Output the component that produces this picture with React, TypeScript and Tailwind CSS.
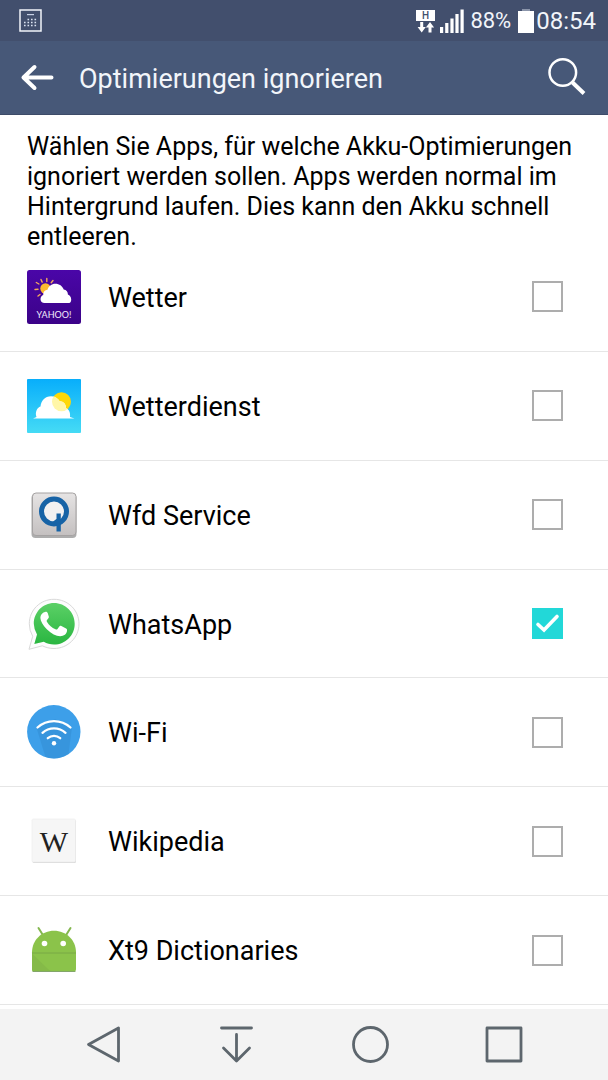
import { useState, type ReactNode } from 'react';

function YahooWeatherIcon() {
  return (
    <svg viewBox="0 0 54 54" className="size-[54px]" aria-hidden="true">
      <defs>
        <linearGradient id="yahoo-bg" x1="0" y1="0" x2="0" y2="1">
          <stop offset="0" stopColor="#4a06a8" />
          <stop offset="1" stopColor="#3b0288" />
        </linearGradient>
      </defs>
      <rect width="54" height="54" rx="2.5" fill="url(#yahoo-bg)" />
      <g stroke="#f3a95c" strokeWidth="1.4" strokeLinecap="round">
        <path d="M8 19.5l3 -.2M9.300 12.500l2.600 1.500M14 9.500l1.200 2.600M19.800 8.500v3M26 10.500l-1.800 2.300M11 26l2 -1.500" />
      </g>
      <circle cx="18.500" cy="18.500" r="5.200" fill="#fdbb2f" />
      <path
        d="M17.500 33c-2.300 0-4-1.600-4-3.800 0-2.200 1.200-3.700 2.800-4.200-.3-3 1.700-5 4.200-5.200C21.500 16 24.700 13.700 28.300 13.700c4 0 7.200 2.300 8.400 5.800 2.800.4 4.300 2.500 4.200 5 2 .7 3.300 2.700 3.300 5 0 2.200-.8 3.500-2 3.500z"
        fill="#fff"
      />
      <text x="27" y="47.500" textAnchor="middle" fontFamily="Lato, sans-serif" fontSize="9" fill="#f3ecfd">
        YAHOO!
      </text>
    </svg>
  );
}

function WeatherServiceIcon() {
  return (
    <svg viewBox="0 0 54 54" className="size-[54px]" aria-hidden="true">
      <defs>
        <linearGradient id="sky" x1="0" y1="0" x2="0" y2="1">
          <stop offset="0" stopColor="#08aefb" />
          <stop offset="1" stopColor="#45dbf5" />
        </linearGradient>
        <clipPath id="sky-cloud">
          <path d="M6 39.500l3.500-1.500c-1.700-4.500.5-9.500 4-10.500.5-6 4.500-10.300 10.500-10.300 4 0 7 2 8.700 5 4 .2 6.300 3 6.300 7 3.500 1.300 4.500 5 4 8.800l4.500 1.500z" />
        </clipPath>
      </defs>
      <rect width="54" height="54" rx="1" fill="url(#sky)" />
      <circle cx="34.500" cy="22.800" r="9.500" fill="#fdd808" />
      <path
        d="M6 39.500l3.500-1.500c-1.700-4.500.5-9.500 4-10.500.5-6 4.500-10.300 10.500-10.300 4 0 7 2 8.700 5 4 .2 6.300 3 6.300 7 3.500 1.300 4.500 5 4 8.800l4.500 1.500z"
        fill="#fff"
      />
      <circle cx="34.500" cy="22.800" r="9.500" fill="#fff6a8" clipPath="url(#sky-cloud)" />
    </svg>
  );
}

function WfdIcon() {
  return (
    <svg viewBox="0 0 54 54" className="size-[54px]" aria-hidden="true">
      <defs>
        <linearGradient id="wfd" x1="0" y1="0" x2="0" y2="1">
          <stop offset="0" stopColor="#e6e4e4" />
          <stop offset="1" stopColor="#c4c0c0" />
        </linearGradient>
      </defs>
      <rect x="4.500" y="6" width="45" height="44" rx="4" fill="#777" opacity=".6" />
      <rect x="5.500" y="5" width="43.500" height="42.500" rx="3.500" fill="url(#wfd)" stroke="#a5a2a2" />
      <circle cx="27" cy="23.500" r="12.500" fill="#f2f1f1" stroke="#1763a6" strokeWidth="5" />
      <path d="M29.500 25.500h4.300V43.500h-4.300zM25.500 34l4.500-3.500v4z" fill="#1763a6" />
    </svg>
  );
}

function WhatsAppIcon() {
  return (
    <svg viewBox="0 0 54 54" className="size-[54px]" aria-hidden="true">
      <defs>
        <linearGradient id="whatsapp" x1="0" y1="0" x2="0" y2="1">
          <stop offset="0" stopColor="#5bd066" />
          <stop offset="1" stopColor="#2ab641" />
        </linearGradient>
      </defs>
      <path
        d="M2 52.300l3.700-13A25 25 0 0 1 2.300 26.800C2.300 13 13.300 2.300 27 2.300S52 13 52 26.800 40.700 51.500 27 51.500c-4.200 0-8.200-1-11.700-2.700z"
        fill="#fdfdfd"
        stroke="#d9d9d9"
        strokeWidth="1"
      />
      <path
        d="M7.300 47l2.700-9.500a21 21 0 0 1-3.200-10.700C6.800 15.300 15.800 6 27 6s20.700 9 20.700 20.700S38.500 47.500 27 47.500c-3.700 0-7.200-1-10.200-2.700z"
        fill="url(#whatsapp)"
      />
      <path
        d="M20.800 16.300c-.8-1.500-1.500-1.600-2.700-1.400-2.900.6-4.800 3.300-4.700 6.200.1 3 2.500 7.200 6.400 11.100 4.800 4.500 9.200 7 13.400 7 3.800 0 6.400-2.300 6.800-5.200.2-1.700.1-2-.9-2.600l-4.700-2.300c-1-.4-1.500-.3-2.100.5l-1.800 2.300c-.6.7-1.100.7-2 .3-3.600-1.500-6.500-4-8.600-7.500-.4-.8-.3-1.200.3-1.900l1.400-1.900c.4-.6.3-1 .1-1.600z"
        fill="#fff"
      />
    </svg>
  );
}

function WifiIcon() {
  return (
    <svg viewBox="0 0 54 54" className="size-[54px]" aria-hidden="true">
      <circle cx="26.800" cy="26.800" r="26.700" fill="#3d9fe9" />
      <path d="M9.500 23l9 29a27 27 0 0 0 23-3l3.500-27-17-8z" fill="#348fd6" opacity=".6" />
      <g fill="none" stroke="#fff" strokeWidth="2.300" strokeLinecap="round">
        <path d="M10.500 22.500a24.500 24.500 0 0 1 33 0" />
        <path d="M15.500 27.800a17 17 0 0 1 23 0" />
        <path d="M20.800 33.200a9.500 9.500 0 0 1 12.400 0" />
      </g>
      <circle cx="27" cy="38.200" r="2.200" fill="#fff" />
    </svg>
  );
}

function WikipediaIcon() {
  return (
    <svg viewBox="0 0 54 54" className="size-[54px]" aria-hidden="true">
      <rect x="5.500" y="6" width="43.500" height="43" rx="1.500" fill="#d9d9d9" />
      <rect x="5" y="5" width="43.500" height="43" rx="1.500" fill="#f6f6f6" stroke="#ededed" strokeWidth=".6" />
      <text x="27" y="37.500" textAnchor="middle" fontFamily="'Liberation Serif', serif" fontSize="30" fill="#222">
        W
      </text>
    </svg>
  );
}

function AndroidIcon() {
  return (
    <svg viewBox="0 0 54 54" className="size-[54px]" aria-hidden="true">
      <path d="M11.500 5l5 8M43.500 5l-5 8" stroke="#84b74f" strokeWidth="2" strokeLinecap="round" />
      <path d="M5 29.500C5 17 14.800 7.800 27 7.800S49 17 49 29.500V46a3 3 0 0 1-3 3H8a3 3 0 0 1-3-3z" fill="#8bc34a" />
      <path d="M5 30.500l16 15.500 4 3H8a3 3 0 0 1-3-3z" fill="#85ba48" />
      <path d="M5 30h44" stroke="#78a944" strokeWidth="1" />
      <path d="M6 48.500h42" stroke="#83a66a" strokeWidth="1" strokeLinecap="round" />
      <circle cx="17.500" cy="20.500" r="2.800" fill="#fff" />
      <circle cx="36.200" cy="20.500" r="2.800" fill="#fff" />
    </svg>
  );
}

const apps: { name: string; icon: ReactNode }[] = [
  { name: 'Wetter', icon: <YahooWeatherIcon /> },
  { name: 'Wetterdienst', icon: <WeatherServiceIcon /> },
  { name: 'Wfd Service', icon: <WfdIcon /> },
  { name: 'WhatsApp', icon: <WhatsAppIcon /> },
  { name: 'Wi-Fi', icon: <WifiIcon /> },
  { name: 'Wikipedia', icon: <WikipediaIcon /> },
  { name: 'Xt9 Dictionaries', icon: <AndroidIcon /> },
];

function StatusBar() {
  return (
    <div className="flex h-[41px] items-center bg-[#424f6d] pr-3 pl-[19px] text-[#f2f5fa]">
      <svg viewBox="0 0 23 23" className="size-[23px]" aria-hidden="true">
        <rect x="1" y="1" width="21" height="21" fill="none" stroke="#f2f5fa" strokeWidth="1.500" />
        <path d="M8 5.600h7" stroke="#c8d2e6" strokeWidth="1.200" />
        <path
          d="M8.500 10.500h9M5 13.500h12.500M5 16.500h12.500"
          stroke="#dbe3f2"
          strokeWidth="1.600"
          strokeDasharray="1.600 1.900"
        />
      </svg>
      <svg viewBox="0 0 48 24" className="ml-auto h-6 w-12" aria-hidden="true">
        <rect x="0" y="1" width="19" height="11" fill="#fff" />
        <text x="9.500" y="10" textAnchor="middle" fontFamily="Roboto, sans-serif" fontSize="10" fontWeight="500" fill="#424f6d">
          H
        </text>
        <path d="M4.200 13h3v5h2.600l-4.100 5.500L1.600 18h2.600z" fill="#fff" />
        <path d="M12.500 23.500h3v-5h2.600L14 13l-4.100 5.500h2.600z" fill="#fff" />
        <path d="M24 18h3.200v6H24zM29.200 14h3.200v10h-3.200zM34.400 9.500h3.200V24h-3.200zM39.400 5h3.200v19h-3.200zM44.500 0.500h3.200V24h-3.200z" fill="#fff" />
      </svg>
      <span className="ml-[6px] text-[22px] leading-6">88%</span>
      <svg viewBox="0 0 16 24" className="ml-[7px] h-6 w-4" aria-hidden="true">
        <path d="M4 0h8v2H4z" fill="#8b95aa" />
        <path d="M0 2h16v22H0z" fill="#fff" />
      </svg>
      <span className="ml-[2px] text-[24px] leading-6">08:54</span>
    </div>
  );
}

function NavButton({ label, children }: { label: string; children: ReactNode }) {
  return (
    <button type="button" aria-label={label} className="flex flex-1 items-center justify-center">
      <svg
        viewBox="0 0 40 40"
        className="size-10"
        fill="none"
        stroke="#5d666d"
        strokeWidth="2.800"
        strokeLinecap="round"
        strokeLinejoin="round"
        aria-hidden="true"
      >
        {children}
      </svg>
    </button>
  );
}

export default function App() {
  const [ignored, setIgnored] = useState<string[]>(['WhatsApp']);
  const toggle = (name: string) =>
    setIgnored((list) => (list.includes(name) ? list.filter((item) => item !== name) : [...list, name]));

  return (
    <div className="flex min-h-screen flex-col bg-white font-['Roboto',sans-serif] text-black">
      <StatusBar />
      <header className="flex h-[74px] items-center border-b border-[#3d4b68] bg-[#475878] pr-[19px] pl-[19px] text-[#f2f5fa]">
        <button type="button" aria-label="Zurück">
          <svg
            viewBox="0 0 36 30"
            className="h-[30px] w-9"
            fill="none"
            stroke="#fff"
            strokeWidth="4"
            strokeLinecap="round"
            strokeLinejoin="round"
            aria-hidden="true"
          >
            <path d="M32.500 14.500H4.500M15.500 4L4.500 14.500l11 10.500" />
          </svg>
        </button>
        <h1 className="ml-6 flex-1 pt-0.5 text-[27px] leading-8">Optimierungen ignorieren</h1>
        <button type="button" aria-label="Suchen">
          <svg viewBox="0 0 42 42" className="size-[42px]" fill="none" stroke="#fff" aria-hidden="true">
            <circle cx="15.800" cy="15.500" r="13.300" strokeWidth="2.500" />
            <path d="M25.500 25.500l11.500 11" strokeWidth="4" />
          </svg>
        </button>
      </header>

      <main className="flex flex-1 flex-col pb-1">
        <p className="pt-[17px] pr-5 pl-[27px] text-[25px] leading-[30px]">
          Wählen Sie Apps, für welche Akku-Optimierungen ignoriert werden sollen. Apps werden normal im Hintergrund
          laufen. Dies kann den Akku schnell entleeren.
        </p>
        <ul className="-mt-[9px] flex flex-1 flex-col">
          {apps.map(({ name, icon }) => (
            <li key={name} className="flex flex-1 border-b border-[#e6e6e6]">
              <label className="flex flex-1 items-center gap-[27px] pr-[45px] pl-[27px]">
                {icon}
                <span className="flex-1 pt-0.5 text-[27px] leading-8">{name}</span>
                <span className="grid size-[31px]">
                  <input
                    type="checkbox"
                    checked={ignored.includes(name)}
                    onChange={() => toggle(name)}
                    className="col-start-1 row-start-1 size-[31px] appearance-none border-2 border-[#adadad] checked:border-[#22d8d8] checked:bg-[#22d8d8]"
                  />
                  {ignored.includes(name) && (
                    <svg
                      viewBox="0 0 31 31"
                      className="pointer-events-none col-start-1 row-start-1 size-[31px]"
                      fill="none"
                      stroke="#fff"
                      strokeWidth="3.600"
                      strokeLinecap="round"
                      aria-hidden="true"
                    >
                      <path d="M6 16.500l6 5.500L25 8.500" />
                    </svg>
                  )}
                </span>
              </label>
            </li>
          ))}
        </ul>
      </main>

      <nav className="flex h-[71px] bg-[#f3f3f3] px-[37px]">
        <NavButton label="Zurück">
          <path d="M34.500 3v33L4.500 19.500z" />
        </NavButton>
        <NavButton label="Benachrichtigungen">
          <path d="M4.500 3h30M19.500 9.500v26M6.500 23l13 13 13-13" />
        </NavButton>
        <NavButton label="Startseite">
          <circle cx="19.500" cy="19.500" r="17" />
        </NavButton>
        <NavButton label="Übersicht">
          <path d="M3 3h34v33H3z" />
        </NavButton>
      </nav>
    </div>
  );
}
